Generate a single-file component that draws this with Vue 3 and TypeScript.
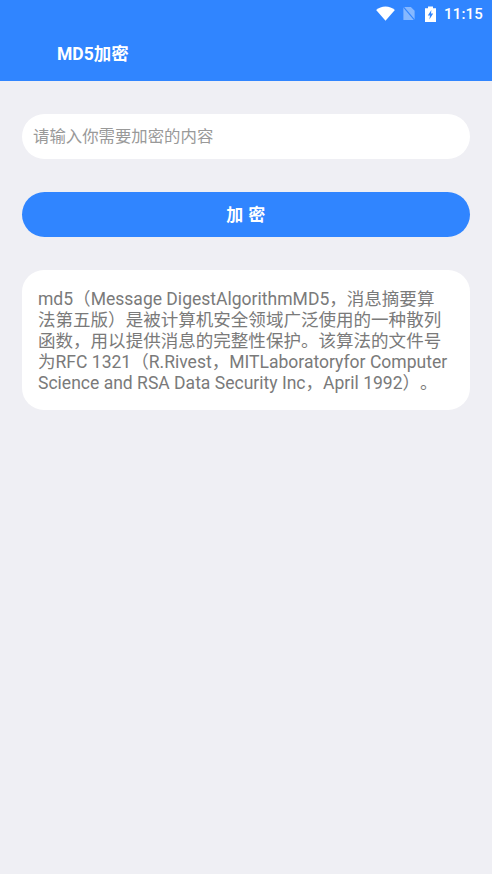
<script setup lang="ts">
const lines: string[] = [
  'md5（Message DigestAlgorithmMD5，消息摘要算',
  '法第五版）是被计算机安全领域广泛使用的一种散列',
  '函数，用以提供消息的完整性保护。该算法的文件号',
  '为RFC 1321（R.Rivest，MITLaboratoryfor Computer',
  'Science and RSA Data Security Inc，April 1992）。',
]
</script>

<template>
  <div class="page">
    <header class="top">
      <div class="status">
        <svg class="wifi" viewBox="0 0 20 16" width="19" height="15"><path d="M0 4.2C2.7 1.8 6.2.4 10 .4s7.3 1.4 10 3.8L10 15.6z" fill="#fff" /></svg>
        <svg class="sim" viewBox="0 0 14 16" width="14" height="15">
          <path d="M1 15V1h8l4 4v10z" fill="#fff" fill-opacity=".42" />
          <path d="M1 1l12 14" stroke="#3085ff" stroke-width="1.2" />
        </svg>
        <svg class="batt" viewBox="0 0 11 16" width="11" height="16">
          <path d="M0 2.2h3V.4h5v1.8h3V16H0z" fill="#fff" />
          <path d="M6.4 4 2.8 9.4h2.2L4.4 13.4 8.2 7.6H6z" fill="#3085ff" />
        </svg>
        <span class="time">11:15</span>
      </div>
      <div class="bar">MD5加密</div>
    </header>
    <main class="body">
      <input class="field" type="text" placeholder="请输入你需要加密的内容" />
      <button class="action" type="button">加 密</button>
      <section class="card">
        <div v-for="line in lines" :key="line" class="line">{{ line }}</div>
      </section>
    </main>
  </div>
</template>

<style scoped>
.page {
  width: 492px;
  height: 874px;
  background: #efeff4;
  font-family: Roboto, "Noto Sans CJK SC", sans-serif;
  text-spacing-trim: space-all;
  overflow: hidden;
}
.top {
  background: #3085ff;
  height: 81px;
  color: #fff;
}
.status {
  height: 27px;
  display: flex;
  align-items: center;
  justify-content: flex-end;
  padding-right: 9px;
  box-sizing: border-box;
}
.wifi { margin-right: 7px; }
.sim { margin-right: 9px; }
.batt { margin-right: 7.5px; }
.time {
  font-size: 15px;
  font-weight: 500;
  letter-spacing: 0.2px;
}
.bar {
  padding-left: 57px;
  font-size: 17.5px;
  font-weight: 700;
  line-height: 54px;
}
.body {
  padding: 33px 22px 0;
  display: flex;
  flex-direction: column;
}
.field {
  height: 45px;
  border: 0;
  outline: 0;
  border-radius: 22.5px;
  background: #fff;
  padding: 0 11px;
  font: 400 16.4px Roboto, "Noto Sans CJK SC", sans-serif;
  box-sizing: border-box;
  width: 100%;
}
.field::placeholder { color: #999; opacity: 1; }
.action {
  margin-top: 33px;
  height: 45px;
  border: 0;
  border-radius: 22.5px;
  background: #3085ff;
  color: #fff;
  font: 700 17px Roboto, "Noto Sans CJK SC", sans-serif;
  letter-spacing: 0.5px;
  padding: 0 0 2px;
}
.card {
  margin-top: 33px;
  background: #fff;
  border-radius: 22px;
  padding: 19px 16px 15px;
  height: 140px;
  box-sizing: border-box;
  color: #7a7a7a;
  font-size: 17.55px;
  line-height: 20.9px;
}
.line { white-space: nowrap; }
</style>

<style>
html, body { margin: 0; background: #efeff4; }
</style>
